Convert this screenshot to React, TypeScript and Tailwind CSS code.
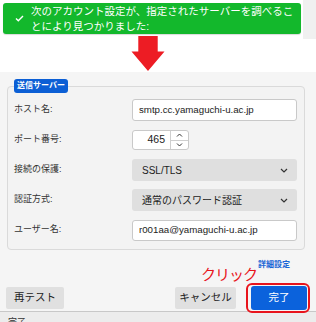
import React from "react";

const font = "font-['Liberation_Sans','Noto_Sans_CJK_JP',sans-serif]";

function Chevron() {
  return (
    <svg width="8" height="5" viewBox="0 0 8 5" className="shrink-0">
      <path d="M1 1 L4 4 L7 1" fill="none" stroke="#333" strokeWidth="1.2" />
    </svg>
  );
}

export default function App() {
  return (
    <div className={`w-[316px] h-[322px] overflow-hidden flex flex-col bg-[#f5f5f5] ${font}`}>
      {/* top */}
      <div className="h-[72px] flex bg-white shrink-0">
        <div className="w-[303px] flex flex-col">
          <div className="ml-[3px] mt-[3px] w-[298px] h-[32px] rounded-[3px] bg-[#13b82c] flex items-center pl-[12px] shadow-[0_1px_1px_rgba(0,0,0,0.15)]">
            <svg width="9" height="7" viewBox="0 0 9 7" className="shrink-0">
              <path d="M1 3.5 L3.3 5.8 L8 1" fill="none" stroke="#fff" strokeWidth="1.4" />
            </svg>
            <div className="ml-[7px] text-white text-[10.5px] leading-[15px]">
              次のアカウント設定が、指定されたサーバーを調べるこ
              <br />
              とにより見つかりました:
            </div>
          </div>
          <svg width="36" height="37" viewBox="0 0 36 37" className="ml-[130px] mt-[2px]">
            <polygon points="8,0 28,0 28,16 35,16 18,36 1,16 8,16" fill="#ed1c24" />
          </svg>
        </div>
        <div className="w-[13px] h-[39px] bg-[#f0f0f0]" />
      </div>

      {/* main */}
      <div className="flex-1 relative pt-[7px]">
        <fieldset className="ml-[7px] w-[298px] border border-[#dadada] rounded-[4px] bg-[#f3f3f3] px-[6px] pb-[8px]">
          <legend className="h-[14px] px-[3px] rounded-[3px] bg-[#0c5fd5] text-white text-[8px] font-bold leading-[14px]">
            送信サーバー
          </legend>
          <div className="mt-[6px] flex flex-col gap-[8px]">
            <div className="flex items-center h-[22px]">
              <div className="w-[118px] text-[9px] text-[#333]">ホスト名:</div>
              <div className="w-[165px] h-[22px] bg-white border border-[#c9c9c9] rounded-[3px] flex items-center pl-[6px] text-[9.7px] text-[#222]">
                smtp.cc.yamaguchi-u.ac.jp
              </div>
            </div>
            <div className="flex items-center h-[22px]">
              <div className="w-[118px] text-[9px] text-[#333]">ポート番号:</div>
              <div className="w-[57px] h-[20px] bg-white border border-[#c9c9c9] rounded-[3px] flex items-center">
                <div className="w-[36px] text-right pr-[4px] text-[10.5px] text-[#222]">465</div>
                <div className="ml-[1px] w-[18px] h-[18px] border-l border-[#cfcfcf] flex flex-col">
                  <div className="flex-1 flex items-center justify-center border-b border-[#cfcfcf]">
                    <svg width="7" height="4" viewBox="0 0 7 4"><path d="M1 3.5 L3.5 1 L6 3.5" fill="none" stroke="#333" strokeWidth="1" /></svg>
                  </div>
                  <div className="flex-1 flex items-center justify-center">
                    <svg width="7" height="4" viewBox="0 0 7 4"><path d="M1 0.5 L3.5 3 L6 0.5" fill="none" stroke="#333" strokeWidth="1" /></svg>
                  </div>
                </div>
              </div>
            </div>
            <div className="flex items-center h-[22px]">
              <div className="w-[118px] text-[9px] text-[#333]">接続の保護:</div>
              <div className="w-[165px] h-[22px] bg-[#dfdfdf] rounded-[3px] flex items-center justify-between pl-[10px] pr-[9px]">
                <span className="text-[10px] font-medium text-[#222]">SSL/TLS</span>
                <Chevron />
              </div>
            </div>
            <div className="flex items-center h-[22px]">
              <div className="w-[118px] text-[9px] text-[#333]">認証方式:</div>
              <div className="w-[165px] h-[22px] bg-[#dfdfdf] rounded-[3px] flex items-center justify-between pl-[10px] pr-[9px]">
                <span className="text-[10px] text-[#222]">通常のパスワード認証</span>
                <Chevron />
              </div>
            </div>
            <div className="flex items-center h-[22px]">
              <div className="w-[118px] text-[9px] text-[#333]">ユーザー名:</div>
              <div className="w-[165px] h-[21px] bg-white border border-[#c9c9c9] rounded-[3px] flex items-center pl-[6px] text-[9.7px] text-[#222]">
                r001aa@yamaguchi-u.ac.jp
              </div>
            </div>
          </div>
        </fieldset>

        <div className="mt-[10px] h-[10px] flex justify-end pr-[26px]">
          <span className="text-[8px] font-bold text-[#1a66d6] leading-[10px]">詳細設定</span>
        </div>

        <div className="mt-[16px] flex items-center pl-[6px] pr-[9px]">
          <div className="w-[58px] h-[22px] bg-[#e0e0e0] rounded-[2px] flex items-center justify-center text-[10.5px] text-[#222]">
            再テスト
          </div>
          <div className="flex-1" />
          <div className="w-[61px] h-[22px] bg-[#e0e0e0] rounded-[2px] flex items-center justify-center text-[10.5px] text-[#222]">
            キャンセル
          </div>
          <div className="ml-[15px] w-[56px] h-[24px] bg-[#0b62dc] rounded-[3px] flex items-center justify-center text-[10.5px] text-white">
            完了
          </div>
        </div>

        {/* annotations */}
        <div className="absolute left-[201px] top-[194px] text-[15px] leading-[18px] text-[#e8141c] tracking-[-1px]">
          クリック
        </div>
        <div className="absolute left-[246px] top-[211px] w-[64px] h-[30px] border-2 border-[#e8141c] rounded-[6px]" />
      </div>

      {/* status bar */}
      <div className="h-[11px] shrink-0 overflow-hidden border-t border-[#c8c8c8] bg-[#ececec] pl-[8px] text-[9px] leading-[20px] text-[#333]">
        完了
      </div>
    </div>
  );
}
